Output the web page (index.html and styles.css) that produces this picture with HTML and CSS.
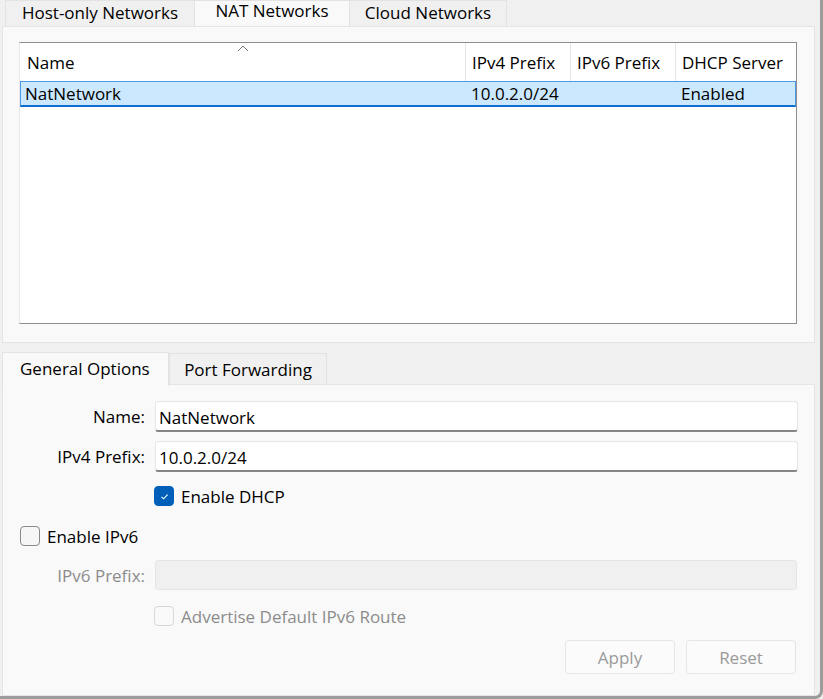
FILE: index.html
```html
<!DOCTYPE html>
<html>
<head>
<meta charset="utf-8">
<link rel="stylesheet" href="styles.css">
</head>
<body>
<div class="frame">
  <div class="tabbar top-tabs">
    <div class="tab first">Host-only Networks</div>
    <div class="tab active">NAT Networks</div>
    <div class="tab">Cloud Networks</div>
  </div>
  <div class="pane top-pane">
    <div class="table">
      <div class="thead">
        <div class="th c-name">Name
          <svg class="sort" width="12" height="7" viewBox="0 0 12 7"><polyline points="1,6 6,1 11,6" fill="none" stroke="#7a7a7a" stroke-width="1"/></svg>
        </div>
        <div class="th c-v4">IPv4 Prefix</div>
        <div class="th c-v6">IPv6 Prefix</div>
        <div class="th c-dhcp">DHCP Server</div>
      </div>
      <div class="tr selected">
        <div class="td c-name">NatNetwork</div>
        <div class="td c-v4">10.0.2.0/24</div>
        <div class="td c-v6"></div>
        <div class="td c-dhcp">Enabled</div>
      </div>
    </div>
  </div>
  <div class="tabbar bottom-tabs">
    <div class="tab active">General Options</div>
    <div class="tab">Port Forwarding</div>
  </div>
  <div class="pane bottom-pane">
    <div class="row field-row r1">
      <label class="lbl">Name:</label>
      <div class="input">NatNetwork</div>
    </div>
    <div class="row field-row r2">
      <label class="lbl">IPv4 Prefix:</label>
      <div class="input">10.0.2.0/24</div>
    </div>
    <div class="row check-row r3 indent">
      <span class="cb checked"><svg width="11" height="9" viewBox="0 0 11 9"><polyline points="2.5,4.8 4.6,6.8 8.6,2.6" fill="none" stroke="#fff" stroke-width="1.1"/></svg></span>
      <span class="cb-label">Enable DHCP</span>
    </div>
    <div class="row check-row r4">
      <span class="cb"></span>
      <span class="cb-label">Enable IPv6</span>
    </div>
    <div class="row field-row r5 disabled">
      <label class="lbl">IPv6 Prefix:</label>
      <div class="input off"></div>
    </div>
    <div class="row check-row r6 indent disabled">
      <span class="cb off"></span>
      <span class="cb-label">Advertise Default IPv6 Route</span>
    </div>
    <div class="row buttons">
      <div class="btn">Apply</div>
      <div class="btn">Reset</div>
    </div>
  </div>
</div>
</body>
</html>
```
FILE: styles.css
```css
* { box-sizing: border-box; }
html, body { margin: 0; padding: 0; }
body {
  width: 823px;
  height: 699px;
  overflow: hidden;
  background: #f0f0f0;
  font-family: "Open Sans", "Noto Sans", sans-serif;
  font-size: 17px;
  color: #000;
}
.frame {
  width: 823px;
  height: 699px;
  border-right: 3px solid #9c9c9c;
  border-bottom: 3px solid #9c9c9c;
  border-bottom-right-radius: 8px;
  display: flex;
  flex-direction: column;
  padding-left: 2px;
  padding-right: 5px;
}
.tabbar { display: flex; align-items: flex-end; }
.top-tabs { height: 26px; padding-left: 3px; }
.tab {
  height: 100%;
  background: #f0f0f0;
  border: 1px solid #e3e3e3;
  border-bottom: none;
  display: flex;
  align-items: center;
  justify-content: center;
  white-space: nowrap;
}
.top-tabs .tab { height: 26px; padding-bottom: 3px; }
.top-tabs .tab:nth-child(1) { width: 190px; }
.top-tabs .tab:nth-child(2) { width: 154px; }
.top-tabs .tab:nth-child(3) { width: 158px; }
.top-tabs .tab.active { background: #f9f9f9; padding-bottom: 6px; border-left: none; border-right: none; }
.pane {
  background: #f9f9f9;
  border: 1px solid #e5e5e5;
}
.top-pane {
  height: 317px;
  padding: 15px 17px 18px 16px;
}
.table {
  height: 100%;
  background: #fff;
  border: 1px solid #8d8d8d;
  border-left-color: #e8e8e8;
}
.thead { display: flex; height: 38px; }
.th {
  position: relative;
  display: flex;
  align-items: center;
  padding-left: 6px;
  padding-top: 1px;
  border-right: 1px solid #e5e5e5;
}
.th.c-name { padding-left: 7px; }
.th.c-dhcp { border-right: none; }
.c-name { width: 446px; }
.c-v4 { width: 105px; }
.c-v6 { width: 105px; }
.c-dhcp { flex: 1; }
.sort { position: absolute; left: 217px; top: 2px; }
.tr { display: flex; height: 26px; }
.tr.selected {
  background: #cce8ff;
  border: 1px solid #4a9ae8;
  border-bottom: 2px solid #0f6fd1;
  margin-left: 0;
}
.td { display: flex; align-items: center; padding-left: 5px; }
.tr .c-name { width: 445px; padding-left: 4px; }
.bottom-tabs { height: 41px; margin-top: 0; }
.bottom-tabs .tab { height: 31px; }
.bottom-tabs .tab:nth-child(1) {
  width: 167px;
  height: 34px;
  background: #f9f9f9;
  justify-content: flex-start;
  padding-left: 17px;
  position: relative;
  top: 1px;
  margin-bottom: -1px;
  padding-bottom: 2px;
}
.bottom-tabs .tab:nth-child(2) { width: 158px; padding-top: 1px; }
.bottom-pane {
  flex: 1;
  padding: 16px 16px 0 17px;
  display: flex;
  flex-direction: column;
}
.row { display: flex; align-items: center; }
.field-row .lbl {
  width: 125px;
  text-align: right;
  margin-right: 10px;
}
.input {
  flex: 1;
  height: 31px;
  background: #fff;
  border: 1px solid #e6e6e6;
  border-bottom: 2px solid #868686;
  border-radius: 3px;
  padding-left: 3px;
  padding-top: 2px;
  display: flex;
  align-items: center;
}
.input.off {
  height: 30px;
  background: #f0f0f0;
  border: 1px solid #e5e5e5;
  margin-right: 1px;
}
.r2 { margin-top: 9px; }
.r3 { margin-top: 14px; height: 20px; }
.r4 { margin-top: 20px; height: 20px; }
.r5 { margin-top: 14px; }
.r6 { margin-top: 16px; height: 20px; }
.indent { padding-left: 134px; }
.cb {
  width: 20px;
  height: 20px;
  border: 1px solid #8a8a8a;
  border-radius: 4px;
  background: #f6f6f6;
  margin-right: 7px;
  display: flex;
  align-items: center;
  justify-content: center;
}
.cb.checked { background: #005fb8; border-color: #005fb8; }
.cb.off { border-color: #d6d6d6; background: #f9f9f9; }
.disabled { color: #8c8c8c; }
.buttons {
  margin-top: 14px;
  justify-content: flex-end;
  gap: 11px;
  padding-right: 2px;
}
.btn {
  width: 110px;
  height: 34px;
  border: 1px solid #e5e5e5;
  border-radius: 4px;
  background: #fbfbfb;
  color: #9a9a9a;
  display: flex;
  align-items: center;
  justify-content: center;
}
```
